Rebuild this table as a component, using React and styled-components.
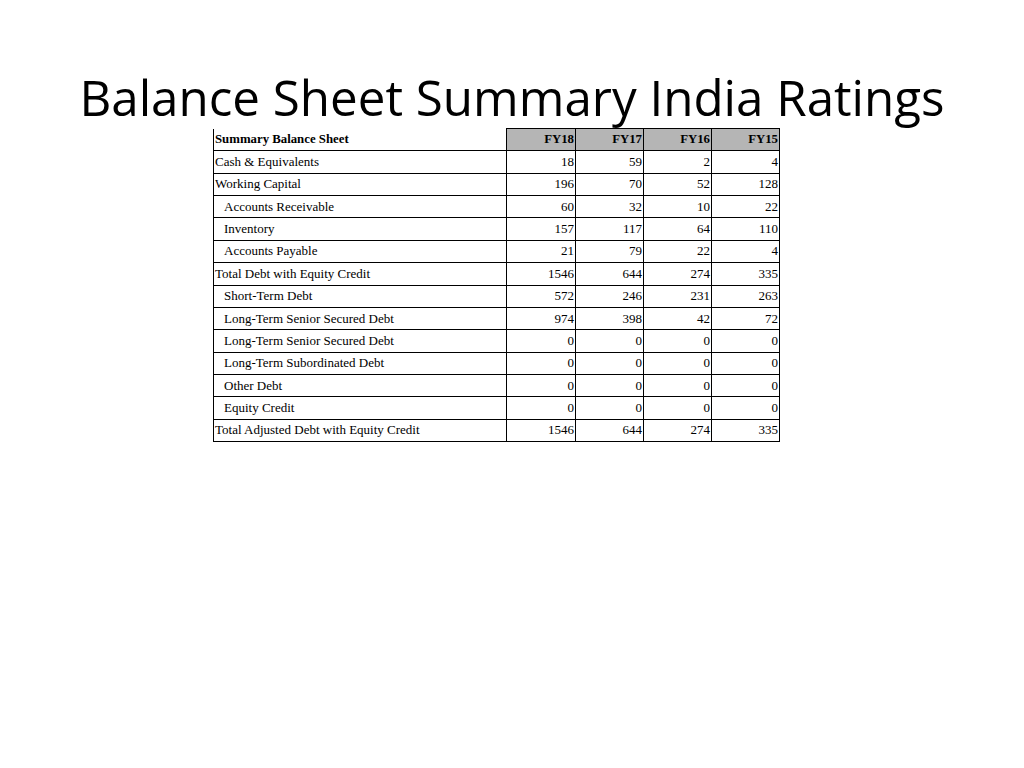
import React from "react";
import styled, { createGlobalStyle } from "styled-components";

const GlobalStyle = createGlobalStyle`
  html, body {
    margin: 0;
    padding: 0;
    background: #fff;
  }
`;

const Slide = styled.div`
  width: 1024px;
  height: 768px;
  display: flex;
  flex-direction: column;
  align-items: center;
  box-sizing: border-box;
  padding-top: 65px;
`;

const Title = styled.h1`
  margin: 0;
  font-family: "Open Sans", Lato, sans-serif;
  font-weight: 400;
  font-size: 49.3px;
  line-height: 63px;
  color: #000;
  white-space: nowrap;
  font-variant-ligatures: none;
`;

const Wrap = styled.div`
  align-self: flex-start;
  margin-left: 213px;
`;

const Table = styled.table`
  border-collapse: collapse;
  table-layout: fixed;
  width: 566px;
  font-family: "Liberation Serif", "Times New Roman", serif;
  font-size: 13px;
  color: #000;
`;

const Row = styled.tr`
  height: 22.36px;
`;

const HeadLabel = styled.th`
  text-align: left;
  font-weight: 700;
  font-size: 12.8px;
  padding: 0 0 0 1px;
  border-left: 1px solid #000;
  border-bottom: 1px solid #000;
`;

const HeadYear = styled.th`
  text-align: right;
  font-weight: 700;
  font-size: 12.8px;
  padding: 0 1px 0 0;
  background: #b5b5b5;
  border: 1px solid #000;
`;

const Label = styled.td`
  text-align: left;
  padding: 0 0 0 ${(p) => (p.$indent ? "10px" : "1px")};
  border: 1px solid #000;
  white-space: nowrap;
`;

const Num = styled.td`
  text-align: right;
  padding: 0 1px 0 0;
  border: 1px solid #000;
`;

const rows = [
  ["Cash & Equivalents", false, [18, 59, 2, 4]],
  ["Working Capital", false, [196, 70, 52, 128]],
  ["Accounts Receivable", true, [60, 32, 10, 22]],
  ["Inventory", true, [157, 117, 64, 110]],
  ["Accounts Payable", true, [21, 79, 22, 4]],
  ["Total Debt with Equity Credit", false, [1546, 644, 274, 335]],
  ["Short-Term Debt", true, [572, 246, 231, 263]],
  ["Long-Term Senior Secured Debt", true, [974, 398, 42, 72]],
  ["Long-Term Senior Secured Debt", true, [0, 0, 0, 0]],
  ["Long-Term Subordinated Debt", true, [0, 0, 0, 0]],
  ["Other Debt", true, [0, 0, 0, 0]],
  ["Equity Credit", true, [0, 0, 0, 0]],
  ["Total Adjusted Debt with Equity Credit", false, [1546, 644, 274, 335]],
];

const years = ["FY18", "FY17", "FY16", "FY15"];

export default function App() {
  return (
    <Slide>
      <GlobalStyle />
      <Title>Balance Sheet Summary India Ratings</Title>
      <Wrap>
        <Table>
          <colgroup>
            <col style={{ width: 293 }} />
            <col style={{ width: 69 }} />
            <col style={{ width: 68 }} />
            <col style={{ width: 68 }} />
            <col style={{ width: 68 }} />
          </colgroup>
          <thead>
            <Row>
              <HeadLabel>Summary Balance Sheet</HeadLabel>
              {years.map((y) => (
                <HeadYear key={y}>{y}</HeadYear>
              ))}
            </Row>
          </thead>
          <tbody>
            {rows.map(([label, indent, vals], i) => (
              <Row key={i}>
                <Label $indent={indent}>{label}</Label>
                {vals.map((v, j) => (
                  <Num key={j}>{v}</Num>
                ))}
              </Row>
            ))}
          </tbody>
        </Table>
      </Wrap>
    </Slide>
  );
}
